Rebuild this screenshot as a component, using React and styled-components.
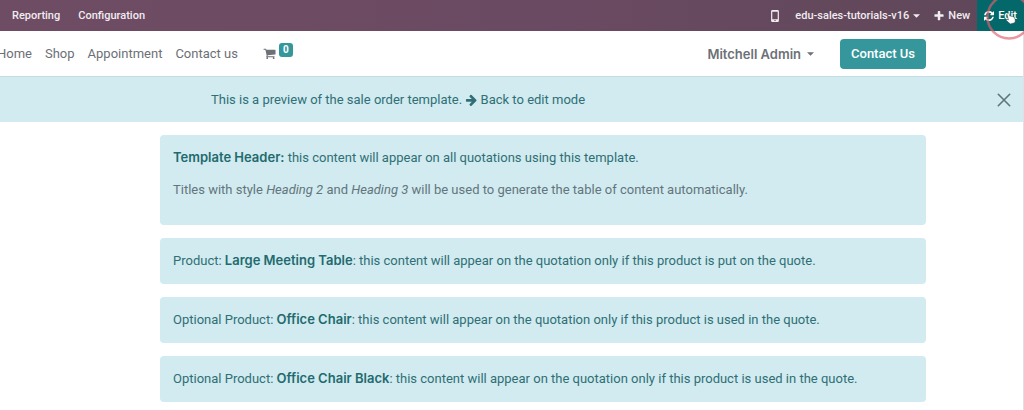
import React from "react";
import styled, { createGlobalStyle } from "styled-components";

const GlobalStyle = createGlobalStyle`
  * {
    box-sizing: border-box;
  }
  body {
    margin: 0;
    background: #ffffff;
    color: #6c7077;
    font-family: Roboto, "Liberation Sans", sans-serif;
    font-size: 13px;
    line-height: 20px;
    overflow-x: hidden;
  }
  a {
    color: inherit;
    text-decoration: none;
  }
  button {
    font: inherit;
    color: inherit;
    border: 0;
    background: none;
    padding: 0;
    cursor: pointer;
  }
`;

const Icon = styled.svg`
  width: ${({ $size }) => $size || 12}px;
  height: ${({ $size }) => $size || 12}px;
  flex-shrink: 0;
  fill: currentColor;
`;

const Caret = styled.svg`
  width: 7px;
  height: 4px;
  flex-shrink: 0;
  fill: currentColor;
`;

const TopBar = styled.header`
  display: flex;
  justify-content: space-between;
  height: 31px;
  overflow: hidden;
  background: linear-gradient(90deg, #6e4c64 0%, #6a4a62 55%, #5f4758 100%);
  color: #f1ecf0;
  font-size: 11px;
  font-weight: 500;
`;

const TopMenu = styled.nav`
  display: flex;
  align-items: center;
  gap: 18px;
  padding-left: 12px;
`;

const TopActions = styled.div`
  display: flex;
  align-items: stretch;
`;

const TopButton = styled.button`
  display: flex;
  align-items: center;
  gap: 4px;
  padding: 0 7px;
`;

const EditButton = styled(TopButton)`
  background: #04676a;
  color: #ffffff;
`;

const Page = styled.div`
  border-right: 1px solid #dfe1e4;
  min-height: calc(100vh - 31px);
`;

const SiteHeader = styled.div`
  display: flex;
  align-items: center;
  justify-content: space-between;
  height: 45px;
  padding-right: 97px;
`;

const SiteMenu = styled.nav`
  display: flex;
  align-items: center;
  gap: 13px;
  margin-left: -3px;
`;

const CartLink = styled.a`
  display: flex;
  align-items: center;
  gap: 3px;
  margin-left: 12px;
`;

const CartCount = styled.span`
  margin-bottom: 8px;
  padding: 0 4px;
  border-radius: 3px;
  background: #35979c;
  color: #ffffff;
  font-size: 10px;
  font-weight: 700;
  line-height: 14px;
`;

const SiteActions = styled.div`
  display: flex;
  align-items: center;
  gap: 26px;
`;

const UserButton = styled.button`
  display: flex;
  align-items: center;
  gap: 6px;
  font-family: Inter, "Liberation Sans", sans-serif;
  font-weight: 600;
`;

const ContactButton = styled.a`
  padding: 5px 11px;
  border-radius: 4px;
  background: #35979c;
  color: #ffffff;
  font-weight: 500;
`;

const Banner = styled.div`
  display: flex;
  align-items: center;
  justify-content: space-between;
  height: 46px;
  padding: 0 12px 0 211px;
  border-top: 1px solid #c3dde3;
  background: #d1ebf0;
  color: #2f6f75;
`;

const BackLink = styled.a`
  svg {
    vertical-align: -2px;
  }
`;

const CloseButton = styled.button`
  display: flex;
  color: #5d747b;
`;

const Content = styled.main`
  display: flex;
  flex-direction: column;
  gap: 13px;
  padding: 13px 97px 9px 160px;
`;

const Alert = styled.div`
  padding: 13px;
  border-radius: 4px;
  background: #d1ebf0;
  color: #2f6f75;

  strong {
    color: #226a6e;
    font-family: Inter, "Liberation Sans", sans-serif;
    font-weight: 600;
    line-height: 1;
  }
`;

const AlertText = styled.p`
  margin: 0 0 12px;
  color: ${({ $muted }) => ($muted ? "#63757c" : "inherit")};
`;

const Pointer = styled.svg`
  position: absolute;
  top: 0;
  right: 0;
  width: 64px;
  height: 44px;
  pointer-events: none;
`;

const products = [
  { kind: "Product", name: "Large Meeting Table", usage: "put on" },
  { kind: "Optional Product", name: "Office Chair", usage: "used in" },
  { kind: "Optional Product", name: "Office Chair Black", usage: "used in" },
];

const CaretDown = () => (
  <Caret viewBox="0 0 8 4" aria-hidden="true">
    <path d="M0 0h8L4 4z" />
  </Caret>
);

const App = () => {
  return (
    <>
      <GlobalStyle />
      <TopBar>
        <TopMenu>
          <a href="#reporting">Reporting</a>
          <a href="#configuration">Configuration</a>
        </TopMenu>
        <TopActions>
          <TopButton aria-label="Mobile preview">
            <Icon viewBox="0 0 12 12">
              <path
                fillRule="evenodd"
                d="M3.4 0h5.2a1.3 1.3 0 0 1 1.3 1.3v9.4A1.3 1.3 0 0 1 8.6 12H3.4a1.3 1.3 0 0 1-1.3-1.3V1.3A1.3 1.3 0 0 1 3.4 0zM3.3 1.8v7.5h5.4V1.8zM5.4 10.1h1.2v1H5.4z"
              />
            </Icon>
          </TopButton>
          <TopButton>
            edu-sales-tutorials-v16
            <CaretDown />
          </TopButton>
          <TopButton>
            <Icon $size={10} viewBox="128 128 1536 1536">
              <path d="M1600 736v192q0 40-28 68t-68 28h-416v416q0 40-28 68t-68 28h-192q-40 0-68-28t-28-68v-416h-416q-40 0-68-28t-28-68v-192q0-40 28-68t68-28h416v-416q0-40 28-68t68-28h192q40 0 68 28t28 68v416h416q40 0 68 28t28 68z" />
            </Icon>
            New
          </TopButton>
          <EditButton>
            <Icon $size={10} viewBox="128 128 1536 1536">
              <path d="M1639 1056q0 5-1 7-64 268-268 434.5t-478 166.5q-146 0-282.5-55t-243.5-157l-129 129q-19 19-45 19t-45-19-19-45v-448q0-26 19-45t45-19h448q26 0 45 19t19 45-19 45l-137 137q71 66 161 102t187 36q134 0 250-65t186-179q11-17 53-117 8-23 30-23h192q13 0 22.5 9.5t9.5 22.5zm25-800v448q0 26-19 45t-45 19h-448q-26 0-45-19t-19-45 19-45l138-138q-148-137-349-137-134 0-250 65t-186 179q-11 17-53 117-8 23-30 23h-199q-13 0-22.5-9.5t-9.5-22.5v-7q65-268 270-434.5t480-166.5q146 0 284 55.5t245 156.5l130-129q19-19 45-19t45 19 19 45z" />
            </Icon>
            Edit
          </EditButton>
        </TopActions>
      </TopBar>
      <Page>
        <SiteHeader>
          <SiteMenu>
            <a href="#home">Home</a>
            <a href="#shop">Shop</a>
            <a href="#appointment">Appointment</a>
            <a href="#contact">Contact us</a>
            <CartLink href="#cart" aria-label="Cart">
              <Icon $size={13} viewBox="0 0 1792 1792">
                <path d="M704 1536q0 52-38 90t-90 38-90-38-38-90 38-90 90-38 90 38 38 90zm896 0q0 52-38 90t-90 38-90-38-38-90 38-90 90-38 90 38 38 90zm128-1088v512q0 24-16.5 42.5t-40.5 21.5l-1044 122q13 60 13 70 0 16-24 64h920q26 0 45 19t19 45-19 45-45 19h-1024q-26 0-45-19t-19-45q0-11 8-31.5t16-36 21.5-40 15.5-29.5l-177-823h-204q-26 0-45-19t-19-45 19-45 45-19h256q16 0 28.5 6.5t19.5 15.5 13 24.5 8 26 5.5 29.5 4.5 26h1201q26 0 45 19t19 45z" />
              </Icon>
              <CartCount>0</CartCount>
            </CartLink>
          </SiteMenu>
          <SiteActions>
            <UserButton>
              Mitchell Admin
              <CaretDown />
            </UserButton>
            <ContactButton href="#contact-us">Contact Us</ContactButton>
          </SiteActions>
        </SiteHeader>
        <Banner>
          <span>
            This is a preview of the sale order template.{" "}
            <BackLink href="#edit">
              <Icon viewBox="64 64 1664 1664">
                <path d="M1664 960q0 54-37 91l-651 651q-39 37-91 37-51 0-90-37l-75-75q-38-38-38-91t38-91l293-293h-704q-52 0-84.5-37.5t-32.5-90.5v-128q0-53 32.5-90.5t84.5-37.5h704l-293-294q-38-36-38-90t38-90l75-75q38-38 90-38 53 0 91 38l651 651q37 35 37 90z" />
              </Icon>{" "}
              Back to edit mode
            </BackLink>
          </span>
          <CloseButton aria-label="Close">
            <Icon $size={14} viewBox="0 0 14 14">
              <path
                d="M1.3 1.3l11.4 11.4M12.7 1.3L1.3 12.7"
                stroke="currentColor"
                strokeWidth="1.6"
                strokeLinecap="round"
              />
            </Icon>
          </CloseButton>
        </Banner>
        <Content>
          <Alert>
            <AlertText>
              <strong>Template Header:</strong> this content will appear on all
              quotations using this template.
            </AlertText>
            <AlertText $muted>
              Titles with style <em>Heading 2</em> and <em>Heading 3</em> will be
              used to generate the table of content automatically.
            </AlertText>
          </Alert>
          {products.map(({ kind, name, usage }) => (
            <Alert key={name}>
              {kind}: <strong>{name}</strong>: this content will appear on the
              quotation only if this product is {usage} the quote.
            </Alert>
          ))}
        </Content>
      </Page>
      {/* click ring and hand cursor over the Edit button */}
      <Pointer viewBox="0 0 64 44" aria-hidden="true">
        <circle
          cx="49"
          cy="17"
          r="21.5"
          fill="none"
          stroke="#e0606c"
          strokeOpacity="0.65"
          strokeWidth="2.5"
        />
        <path
          d="M47.5 13.2c.8-.5 1.5 0 1.7.8l.6 2.2.5-.2c.6-.2 1 0 1.3.5.6-.3 1.2 0 1.5.5.8-.3 1.3.2 1.5.8l.6 2.2c.2 1-.2 2-.6 2.8l-4.3 1.1c-1.2-.8-2.6-2.2-3.8-3.3-.8-.8.2-1.7 1-1.2l.9.5-1.3-5.2c-.1-.6 0-1.2.4-1.5z"
          fill="#ffffff"
          stroke="#33474c"
          strokeWidth="0.5"
        />
      </Pointer>
    </>
  );
};

export default App;
